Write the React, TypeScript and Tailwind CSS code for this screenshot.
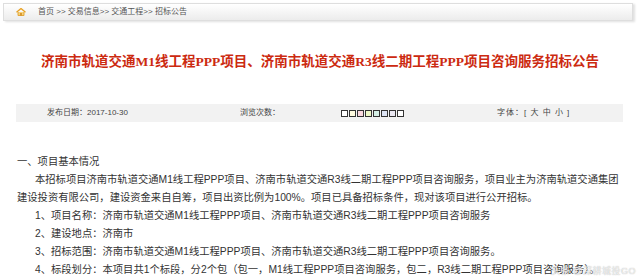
import React from "react";

const swatches = ["#ffffff", "#fffbe0", "#fbd9e0", "#eef8c8", "#d6f0e6", "#dde4f4", "#ebe8f2", "#ffffff"];

const body = [
  { indent: false, text: "一、项目基本情况" },
  { indent: true, text: "本招标项目济南市轨道交通M1线工程PPP项目、济南市轨道交通R3线二期工程PPP项目咨询服务，项目业主为济南轨道交通集团" },
  { indent: false, text: "建设投资有限公司，建设资金来自自筹，项目出资比例为100%。项目已具备招标条件，现对该项目进行公开招标。" },
  { indent: true, text: "1、项目名称：济南市轨道交通M1线工程PPP项目、济南市轨道交通R3线二期工程PPP项目咨询服务" },
  { indent: true, text: "2、建设地点：济南市" },
  { indent: true, text: "3、招标范围：济南市轨道交通M1线工程PPP项目、济南市轨道交通R3线二期工程PPP项目咨询服务。" },
  { indent: true, text: "4、标段划分：本项目共1个标段，分2个包（包一，M1线工程PPP项目咨询服务，包二，R3线二期工程PPP项目咨询服务）。" },
];

function HomeIcon() {
  return (
    <svg width="10" height="8" viewBox="0 0 10 8">
      <path d="M0.5 4.2 L5 0.6 L9.5 4.2" fill="none" stroke="#e8a020" strokeWidth="1.3" strokeLinejoin="round" />
      <path d="M2 4 L2 7.5 L8 7.5 L8 4" fill="#f6d27a" stroke="#e0a030" strokeWidth="0.9" />
      <rect x="4.2" y="5" width="1.6" height="2.5" fill="#d08a20" />
    </svg>
  );
}

export default function App() {
  return (
    <div className="w-[640px] h-[279px] overflow-hidden bg-white relative" style={{ fontFamily: '"Liberation Sans", "Noto Sans CJK SC", sans-serif' }}>
      {/* breadcrumb */}
      <div className="mt-[3px] ml-[3px] w-[630px] h-[18px] border border-[#dedede] bg-gradient-to-b from-white to-[#ececec] shadow-[2px_1px_2px_rgba(0,0,0,0.12)] flex items-center">
        <div className="w-[34px] flex justify-center">
          <HomeIcon />
        </div>
        <span className="text-[8px] text-[#555] whitespace-nowrap leading-none">首页 &gt;&gt; 交易信息&gt;&gt; 交通工程&gt;&gt; 招标公告</span>
      </div>

      {/* title */}
      <h1
        className="mt-[31px] text-center text-[13.5px] font-semibold text-[#cc2a10] leading-[20px] whitespace-nowrap"
        style={{ fontFamily: '"Liberation Serif", "Noto Sans CJK SC", serif' }}
      >
        济南市轨道交通M1线工程PPP项目、济南市轨道交通R3线二期工程PPP项目咨询服务招标公告
      </h1>

      {/* info bar */}
      <div className="mt-[32px] ml-[16px] w-[607px] h-[18px] bg-[#f2f2f2] flex items-center text-[8px] text-[#444] whitespace-nowrap leading-none">
        <span className="w-[224px] pl-[31px]">发布日期：2017-10-30</span>
        <span className="w-[101px]">浏览次数：</span>
        <span className="w-[156px] flex gap-[1px]">
          {swatches.map((c, i) => (
            <span key={i} className="w-[7px] h-[7px] border border-[#333]" style={{ background: c }} />
          ))}
        </span>
        <span className="tracking-[1px]">字体：[ 大 中 小 ]</span>
      </div>

      {/* body */}
      <div className="mt-[31px] text-[10.3px] leading-[18px] text-[#333] whitespace-nowrap">
        {body.map((l, i) => (
          <div key={i} className={l.indent ? "pl-[35px]" : "pl-[17px]"}>
            {l.text}
          </div>
        ))}
      </div>

      {/* watermark */}
      <div className="absolute right-[4px] bottom-[1px] text-[9px] text-white/80 [text-shadow:0_0_1px_#999] tracking-[0.5px]">
        头条 @深耕城投GO
      </div>
    </div>
  );
}
